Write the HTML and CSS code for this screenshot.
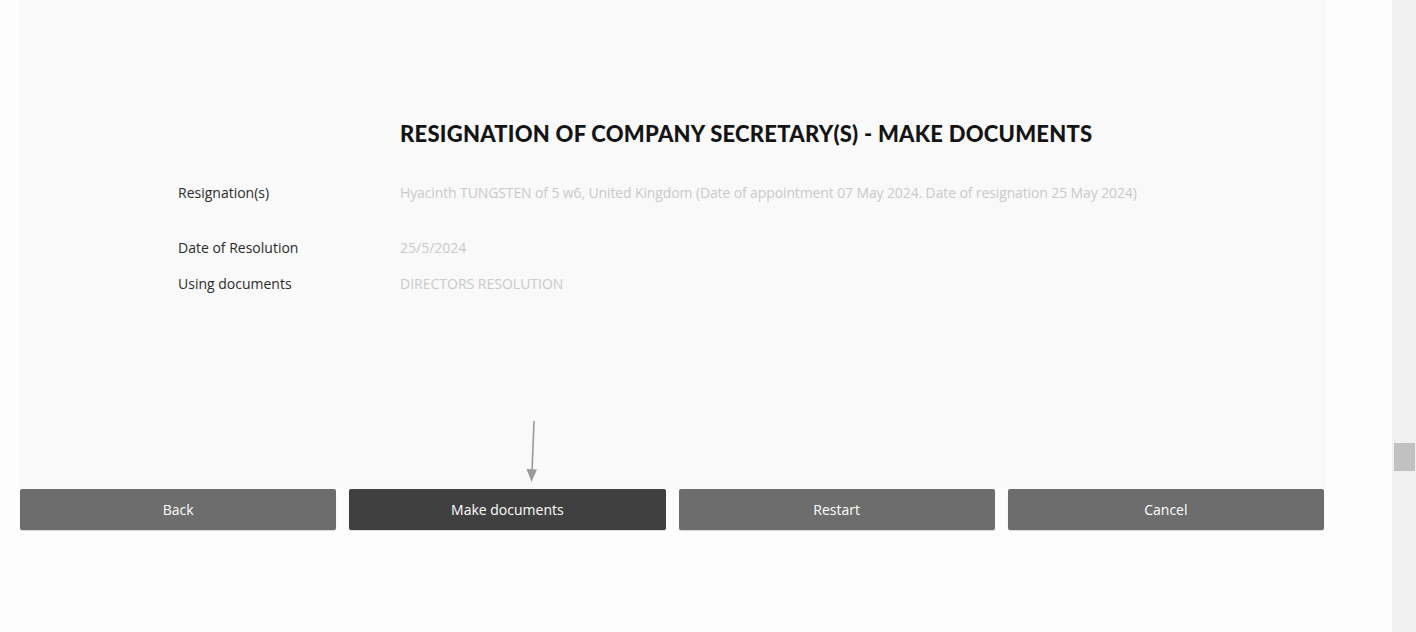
FILE: index.html
```html
<!DOCTYPE html>
<html>
<head>
<meta charset="utf-8">
<link rel="stylesheet" href="styles.css">
</head>
<body>
<div class="page">
  <main class="main">
    <section class="panel">
      <div class="row title-row">
        <div class="label"></div>
        <h1 class="title">RESIGNATION OF COMPANY SECRETARY(S) - MAKE DOCUMENTS</h1>
      </div>
      <div class="row row-first">
        <div class="label">Resignation(s)</div>
        <div class="value value-long">Hyacinth TUNGSTEN of 5 w6, United Kingdom (Date of appointment 07 May 2024. Date of resignation 25 May 2024)</div>
      </div>
      <div class="row row-second">
        <div class="label">Date of Resolution</div>
        <div class="value">25/5/2024</div>
      </div>
      <div class="row row-third">
        <div class="label">Using documents</div>
        <div class="value">DIRECTORS RESOLUTION</div>
      </div>
      <svg class="arrow" width="20" height="66" viewBox="0 0 20 66">
        <line x1="13" y1="1" x2="11" y2="52" stroke="#9a9a9a" stroke-width="1.6"/>
        <polygon points="5.5,49 16,49.5 10.5,62" fill="#9a9a9a"/>
      </svg>
    </section>
    <div class="buttons">
      <button class="btn">Back</button>
      <button class="btn btn-dark">Make documents</button>
      <button class="btn">Restart</button>
      <button class="btn">Cancel</button>
    </div>
  </main>
  <aside class="scrollbar"><div class="thumb"></div></aside>
</div>
</body>
</html>
```
FILE: styles.css
```css
html, body {
  margin: 0;
  padding: 0;
  background: #fdfdfd;
  height: 100%;
  overflow: hidden;
}
.page {
  display: flex;
  height: 632px;
  font-family: "Open Sans", "Liberation Sans", sans-serif;
}
.main {
  flex: 1;
  padding-left: 19px;
  padding-right: 66px;
}
.panel {
  position: relative;
  background: #f9f9f9;
  height: 489px;
  box-sizing: border-box;
  padding: 119px 0 0 159px;
}
.row {
  display: flex;
  align-items: center;
  font-size: 14px;
  line-height: 20px;
}
.label {
  width: 222px;
  flex: none;
  color: #2b2b2b;
}
.value {
  color: #c9c9c9;
}
.value-long {
  letter-spacing: -0.12px;
}
.title {
  margin: 0;
  font-family: "Lato", "Liberation Sans", sans-serif;
  font-weight: 900;
  font-size: 22px;
  line-height: 30px;
  color: #141414;
  letter-spacing: 0.25px;
}
.row-first { margin-top: 34px; }
.row-second { margin-top: 35px; }
.row-third { margin-top: 16px; }
.arrow {
  position: absolute;
  left: 502px;
  top: 420px;
}
.buttons {
  display: flex;
  gap: 13px;
  width: 1304px;
  margin-left: 1px;
}
.btn {
  flex: 1;
  height: 41px;
  border: none;
  border-radius: 2px;
  background: #6d6d6d;
  color: #ffffff;
  font-family: "Open Sans", "Liberation Sans", sans-serif;
  font-size: 14px;
  box-shadow: 0 1px 1px rgba(0,0,0,0.15);
  padding: 0;
}
.btn-dark {
  background: #404040;
}
.scrollbar {
  width: 24px;
  flex: none;
  background: #f0f0f0;
  padding-top: 443px;
  box-sizing: border-box;
}
.thumb {
  width: 21px;
  height: 28px;
  margin-left: 2px;
  background: #c1c1c1;
}
```
